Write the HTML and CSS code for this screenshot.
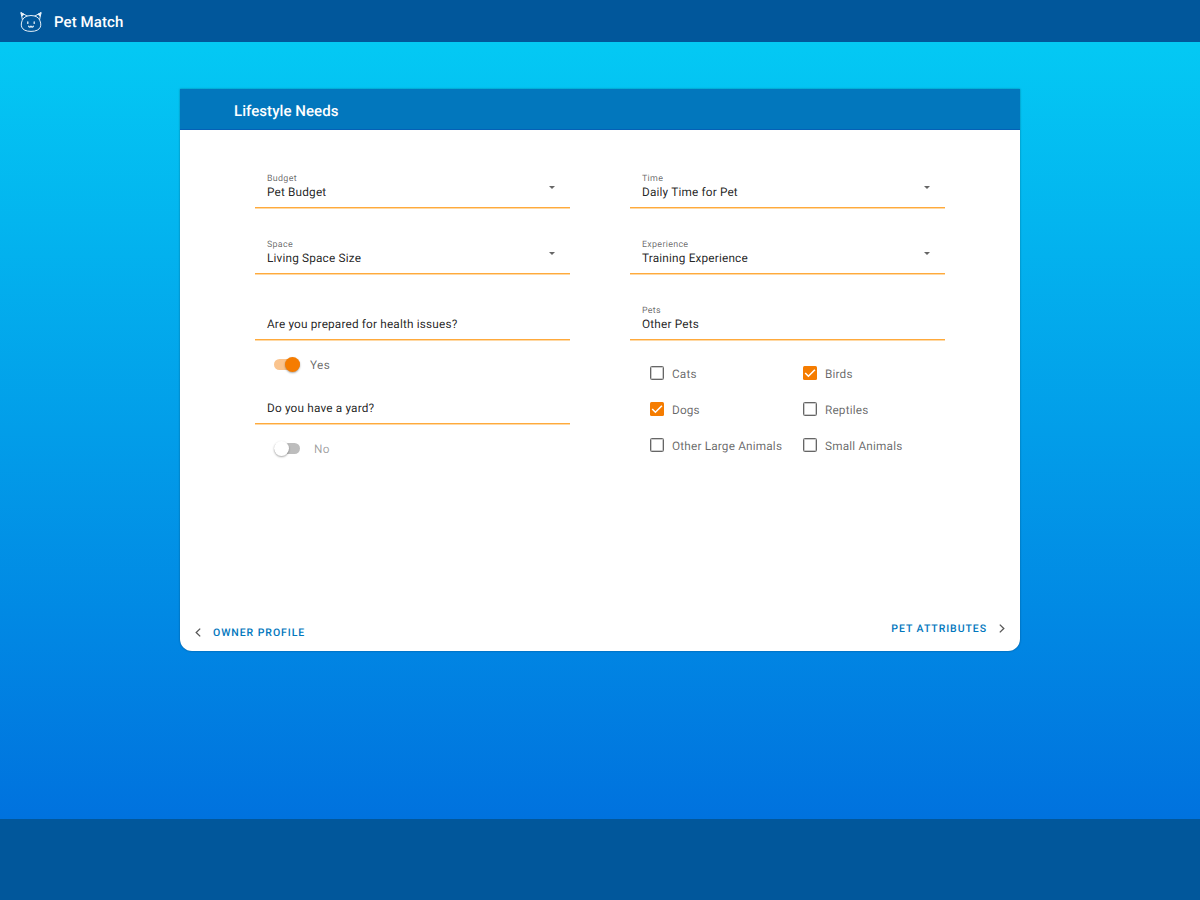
FILE: index.html
```html
<!DOCTYPE html>
<html lang="en">
<head>
<meta charset="utf-8">
<title>Pet Match</title>
<link rel="stylesheet" href="styles.css">
</head>
<body>
<header class="topbar">
  <svg class="logo" viewBox="0 0 22 22"><path d="M2.3 8.4 1.2 1.7 7.1 5Q11 4 14.9 5L20.8 1.7 19.7 8.4M3.2 7.6C-.6 13.5.5 20.4 11 20.4S22.6 13.5 18.8 7.6Q17.3 5.8 14.9 5M7.1 5Q4.7 5.8 3.2 7.6"/><path class="solid" d="M1.2 1.7 4 3.3 2 5zM20.8 1.7 18 3.3 20 5z"/><path class="face" d="M7.8 10.8v1.6M14.2 10.8v1.6M8.6 15.2q1.2 1.8 2.4 0q1.2 1.8 2.4 0"/></svg>
  <span class="brand">Pet Match</span>
</header>
<main class="stage">
  <section class="card">
    <h1 class="card-title">Lifestyle Needs</h1>
    <div class="form">
      <div class="column">
        <div class="field"><label class="label">Budget</label><span class="value">Pet Budget</span><i class="caret"></i></div>
        <div class="field"><label class="label">Space</label><span class="value">Living Space Size</span><i class="caret"></i></div>
        <div class="field"><label class="label"></label><span class="value">Are you prepared for health issues?</span></div>
        <div class="toggle on"><span class="track"><i class="thumb"></i></span><span class="toggle-text">Yes</span></div>
        <div class="field yard"><label class="label"></label><span class="value">Do you have a yard?</span></div>
        <div class="toggle off"><span class="track"><i class="thumb"></i></span><span class="toggle-text">No</span></div>
      </div>
      <div class="column">
        <div class="field"><label class="label">Time</label><span class="value">Daily Time for Pet</span><i class="caret"></i></div>
        <div class="field"><label class="label">Experience</label><span class="value">Training Experience</span><i class="caret"></i></div>
        <div class="field"><label class="label">Pets</label><span class="value">Other Pets</span></div>
        <div class="checks">
          <span class="check"><i class="box"></i>Cats</span>
          <span class="check"><svg class="box checked" viewBox="0 0 14 14"><path d="M2.2 7 5.4 10.2 11.9 3.7"/></svg>Birds</span>
          <span class="check"><svg class="box checked" viewBox="0 0 14 14"><path d="M2.2 7 5.4 10.2 11.9 3.7"/></svg>Dogs</span>
          <span class="check"><i class="box"></i>Reptiles</span>
          <span class="check"><i class="box"></i>Other Large Animals</span>
          <span class="check"><i class="box"></i>Small Animals</span>
        </div>
      </div>
    </div>
    <nav class="steps">
      <a class="step back"><svg class="chevron" viewBox="0 0 6 9"><path d="M5.2.6 1.2 4.5 5.2 8.4"/></svg>OWNER PROFILE</a>
      <a class="step next">PET ATTRIBUTES<svg class="chevron" viewBox="0 0 6 9"><path d="M.8.6 4.8 4.5.8 8.4"/></svg></a>
    </nav>
  </section>
</main>
<footer class="footer"></footer>
</body>
</html>
```
FILE: styles.css
```css
* { box-sizing: border-box; }
body {
  margin: 0;
  height: 900px;
  overflow: hidden;
  display: flex;
  flex-direction: column;
  font-family: Roboto, sans-serif;
  font-size: 11.8px;
  letter-spacing: 0.17px;
  text-rendering: geometricPrecision;
}
.topbar {
  height: 42px;
  display: flex;
  align-items: center;
  gap: 12px;
  padding: 1px 20px 0;
  background: #01579b;
  color: #fff;
}
.logo { width: 22px; height: 22px; fill: none; stroke: #e6f0f8; stroke-width: 1; stroke-linejoin: round; stroke-linecap: round; }
.solid { fill: #e6f0f8; }
.face { stroke-width: 1.3; }
.brand { font-size: 15px; font-weight: 500; letter-spacing: 0.08px; }
.stage {
  flex: 1;
  padding-top: 47px;
  background: linear-gradient(#04c9f4, #0072de);
}
.card {
  width: 840px;
  height: 562px;
  margin: 0 auto;
  display: flex;
  flex-direction: column;
  background: #fff;
  border-radius: 0 0 12px 12px;
  box-shadow: 0 0 2px rgba(0, 0, 0, 0.4);
}
.card-title {
  margin: 0;
  height: 41px;
  padding: 1px 54px 0;
  line-height: 42px;
  background: #0277bd;
  border-bottom: 1px solid #0560b6;
  color: #fff;
  font-size: 15px;
  font-weight: 500;
  letter-spacing: 0.06px;
}
.form { flex: 1; display: flex; gap: 60px; padding: 36px 75px 0; }
.column { width: 315px; }
.field {
  position: relative;
  height: 42px;
  margin-bottom: 24px;
  padding: 6px 12px 0;
  border-bottom: 1px solid #ffaa3c;
  box-shadow: 0 1px #ffd9a5;
  color: rgba(0, 0, 0, 0.87);
}
.label { display: block; height: 12px; font-size: 8.9px; line-height: 15px; letter-spacing: 0.31px; color: rgba(0, 0, 0, 0.6); }
.value { display: block; line-height: 17px; }
.caret {
  position: absolute;
  right: 15px;
  top: 20px;
  border: 3px solid transparent;
  border-top: 3px solid #666;
  border-bottom: 0;
}
.field:nth-child(3) { margin-bottom: 0; }
.field.yard { margin-bottom: 0; }
.toggle { height: 42px; display: flex; align-items: center; padding: 8px 19px 0; color: rgba(0, 0, 0, 0.6); }
.track { position: relative; width: 26px; height: 11px; margin-top: -1px; border-radius: 6px; background: #fac48e; }
.thumb { position: absolute; right: 0; top: -2px; width: 15px; height: 15px; border-radius: 50%; background: #f57c00; box-shadow: 0 1px 2px rgba(0, 0, 0, 0.35); }
.toggle-text { margin-left: 10px; letter-spacing: 0.35px; }
.off { color: rgba(0, 0, 0, 0.38); }
.off .track { background: #bdbdbd; }
.off .thumb { left: 0; background: #fff; }
.off .toggle-text { margin-left: 14px; }
.checks { display: grid; grid-template-columns: 153px 1fr; grid-auto-rows: 36px; padding: 16px 20px 0; }
.check { display: flex; align-items: center; gap: 8px; white-space: nowrap; color: rgba(0, 0, 0, 0.6); }
.box { flex: none; width: 14px; height: 14px; margin-top: -2px; border: 1px solid #666; box-shadow: inset 0 0 0 0.5px #999; border-radius: 1.5px; }
.checked { border: 0; box-shadow: none; background: #f57c00; fill: none; stroke: #fff; stroke-width: 1.6; }
.steps { display: flex; justify-content: space-between; padding: 0 15px 11px; }
.step { display: flex; align-items: center; gap: 12px; height: 15px; font-size: 10.5px; font-weight: 500; letter-spacing: 0.94px; color: #0277bd; }
.next { margin-top: -4px; }
.chevron { width: 6px; height: 9px; fill: none; stroke: #555; stroke-width: 1.3; }
.footer { height: 81px; background: #01579b; }
```
